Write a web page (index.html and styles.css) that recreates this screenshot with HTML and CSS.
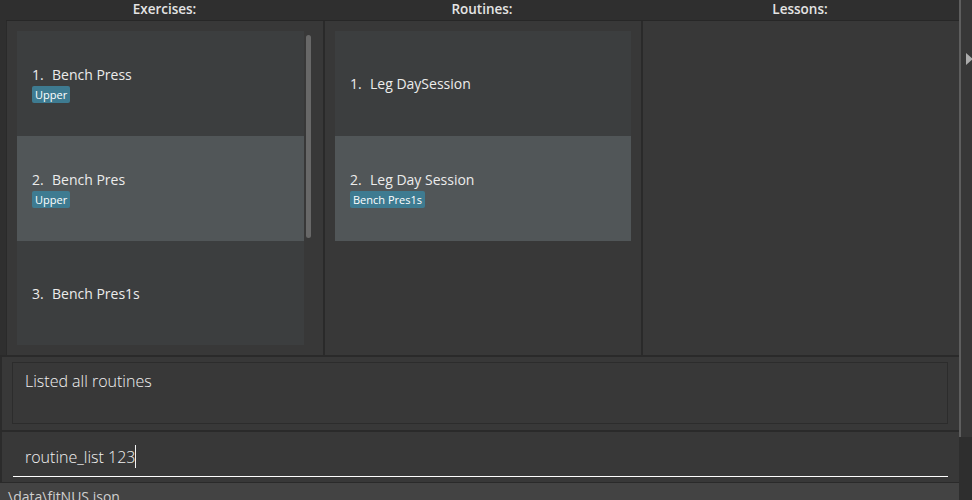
FILE: index.html
```html
<!DOCTYPE html>
<html lang="en">
<head>
  <meta charset="UTF-8" />
  <title>fitNUS</title>
  <link rel="stylesheet" href="styles.css">
</head>
<body>
  <div class="app">
    <div class="content">
      <div class="columns">
        <div class="column col-first">
          <div class="column-title">Exercises:</div>
          <div class="column-panel">
            <div class="list-view">
              <div class="list-cells">
                <div class="cell">
                  <div class="cell-name"><span class="cell-id">1.</span>Bench Press</div>
                  <div class="tags"><span class="tag">Upper</span></div>
                </div>
                <div class="cell odd">
                  <div class="cell-name"><span class="cell-id">2.</span>Bench Pres</div>
                  <div class="tags"><span class="tag">Upper</span></div>
                </div>
                <div class="cell">
                  <div class="cell-name"><span class="cell-id">3.</span>Bench Pres1s</div>
                </div>
              </div>
              <div class="scroll-track"><div class="scroll-thumb"></div></div>
            </div>
          </div>
        </div>
        <div class="column">
          <div class="column-title">Routines:</div>
          <div class="column-panel">
            <div class="list-view">
              <div class="list-cells">
                <div class="cell">
                  <div class="cell-name"><span class="cell-id">1.</span>Leg DaySession</div>
                </div>
                <div class="cell odd">
                  <div class="cell-name"><span class="cell-id">2.</span>Leg Day Session</div>
                  <div class="tags"><span class="tag">Bench Pres1s</span></div>
                </div>
              </div>
            </div>
          </div>
        </div>
        <div class="column">
          <div class="column-title">Lessons:</div>
          <div class="column-panel"></div>
        </div>
      </div>
      <div class="result-pane">
        <div class="result-display">Listed all routines</div>
      </div>
      <div class="command-pane">
        <div class="command-box">routine_list 123<span class="caret"></span></div>
      </div>
      <div class="status-bar">\data\fitNUS.json</div>
    </div>
    <div class="side-scroll">
      <div class="side-track"><span class="side-arrow"></span></div>
    </div>
  </div>
</body>
</html>
```

FILE: styles.css
```css
body {
  margin: 0;
  background: #2e2e2e;
  font-family: "Open Sans", "Noto Sans", sans-serif;
  color: #e6e6e6;
  overflow: hidden;
}
.app {
  display: flex;
  width: 972px;
  height: 500px;
}
.content {
  width: 959px;
  display: flex;
  flex-direction: column;
}
.columns {
  display: flex;
  height: 355px;
  padding-left: 6px;
  background: #2f2f2f;
  border-bottom: 2px solid #2a2a2a;
}
.column {
  width: 318px;
  display: flex;
  flex-direction: column;
}
.col-first {
  width: 317px;
}
.column-title {
  height: 20px;
  line-height: 19px;
  text-align: center;
  font-size: 13.5px;
  font-weight: 600;
  color: #e4e4e4;
  border-bottom: 1px solid #272727;
}
.column-panel {
  flex: 1;
  background: #383838;
  padding: 10px;
  border-left: 2px solid #2a2a2a;
}
.col-first .column-panel {
  border-left: 1px solid #2a2a2a;
}
.list-view {
  display: flex;
  height: 314px;
  overflow: hidden;
}
.list-cells {
  flex: 1;
}
.cell {
  height: 105px;
  background: #3c3e3f;
  padding: 0 15px;
  display: flex;
  flex-direction: column;
  justify-content: center;
  box-sizing: border-box;
}
.cell.odd {
  background: #515658;
}
.cell-name {
  font-size: 14px;
  line-height: 19px;
  color: #ececec;
}
.cell-id {
  display: inline-block;
  width: 20px;
}
.tags {
  display: flex;
  gap: 4px;
  margin-top: 2px;
}
.tag {
  background: #3e7b91;
  color: #fff;
  font-size: 11px;
  line-height: 15px;
  padding: 1px 3px;
  border-radius: 2px;
}
.scroll-track {
  width: 9px;
  padding-top: 4px;
}
.scroll-thumb {
  width: 5px;
  height: 203px;
  margin-left: 2px;
  background: #686868;
  border-radius: 3px;
}
.result-pane {
  height: 75px;
  box-sizing: border-box;
  padding: 5px 11px 6px 10px;
  background: #383838;
  border-left: 2px solid #2b2b2b;
  border-bottom: 2px solid #2a2a2a;
}
.result-display {
  height: 100%;
  box-sizing: border-box;
  border: 1px solid #2c2c2c;
  padding: 7px 12px;
  font-size: 16px;
  font-weight: 300;
  color: #f2f2f2;
}
.command-pane {
  height: 50px;
  box-sizing: border-box;
  padding: 0 11px 5px 11px;
  background: #383838;
  border-left: 2px solid #2b2b2b;
  display: flex;
  align-items: flex-end;
}
.command-box {
  flex: 1;
  border-bottom: 1px solid #ffffff;
  padding: 0 12px 8px;
  font-size: 16px;
  font-weight: 300;
  line-height: 22px;
  color: #f2f2f2;
  display: flex;
  align-items: center;
}
.caret {
  display: inline-block;
  width: 1px;
  height: 23px;
  background: #f2f2f2;
}
.status-bar {
  flex: 1;
  background: #434343;
  border-top: 1px solid #2a2a2a;
  padding: 4px 8px 0;
  font-size: 14px;
  color: #d0d0d0;
  line-height: 20px;
  overflow: hidden;
}
.side-scroll {
  width: 13px;
}
.side-track {
  height: 437px;
  background: #373737;
  border-left: 2px solid #5e5e5e;
  position: relative;
}
.side-arrow {
  position: absolute;
  left: 5px;
  top: 53px;
  width: 0;
  height: 0;
  border-top: 6px solid transparent;
  border-bottom: 6px solid transparent;
  border-left: 7px solid #ababab;
}
```
